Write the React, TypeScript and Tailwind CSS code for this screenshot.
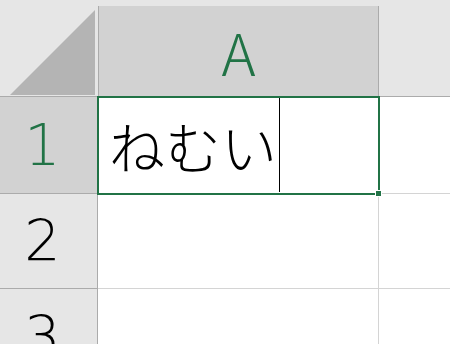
export default function App() {
  const jp = { fontFamily: '"Noto Sans CJK JP", "Noto Sans", sans-serif' }
  const num = { fontFamily: '"DejaVu Sans", "Noto Sans CJK JP", sans-serif' }

  return (
    <div
      className="relative flex h-[344px] w-[450px] flex-col overflow-hidden bg-white font-light"
      style={jp}
    >
      {/* column headers */}
      <div className="flex h-[97px] shrink-0 bg-[#e6e6e6]">
        <div className="relative h-[97px] w-[98px] shrink-0 border-b border-[#ababab]">
          <svg width="98" height="96" className="absolute left-0 top-0">
            <polygon points="10,95 95,10 95,95" fill="#b4b4b4" />
          </svg>
        </div>
        <div className="flex w-[281px] shrink-0 flex-col">
          <div className="h-[6px]" />
          <div className="flex flex-1 items-center justify-center border-x border-b border-[#ababab] bg-[#d2d2d2] text-[58px] leading-none text-[#217346]">
            A
          </div>
        </div>
        <div className="flex-1 border-b border-[#ababab]" />
      </div>

      {/* row 1 */}
      <div className="flex h-[97px] shrink-0">
        <div
          className="flex w-[98px] shrink-0 items-center justify-center border-b border-r border-[#ababab] bg-[#d2d2d2] pr-[12px] text-[57px] font-extralight leading-none text-[#217346]"
          style={num}
        >
          1
        </div>
        <div className="flex w-[281px] shrink-0 items-center border-b border-r border-[#d4d4d4] pl-[11px] text-[56px] leading-none text-black">
          <span>ねむい</span>
          <span className="ml-[2px] h-[94px] w-px bg-black" />
        </div>
        <div className="flex-1 border-b border-[#d4d4d4]" />
      </div>

      {/* row 2 */}
      <div className="flex h-[95px] shrink-0">
        <div
          className="flex w-[98px] shrink-0 items-center justify-center border-b border-r border-[#ababab] bg-[#e6e6e6] pr-[12px] text-[57px] font-extralight leading-none text-black"
          style={num}
        >
          2
        </div>
        <div className="w-[281px] shrink-0 border-b border-r border-[#d4d4d4]" />
        <div className="flex-1 border-b border-[#d4d4d4]" />
      </div>

      {/* row 3 */}
      <div className="flex flex-1">
        <div
          className="flex w-[98px] shrink-0 items-start justify-center border-r border-[#ababab] bg-[#e6e6e6] pr-[12px] pt-[20px] text-[57px] font-extralight leading-none text-black"
          style={num}
        >
          3
        </div>
        <div className="w-[281px] shrink-0 border-r border-[#d4d4d4]" />
        <div className="flex-1" />
      </div>

      {/* selection */}
      <div className="pointer-events-none absolute left-[97px] top-[96px] h-[99px] w-[283px] border-2 border-[#217346]" />
      <div className="pointer-events-none absolute left-[375px] top-[190px] h-[7px] w-[7px] border border-white bg-[#217346]" />
    </div>
  )
}
